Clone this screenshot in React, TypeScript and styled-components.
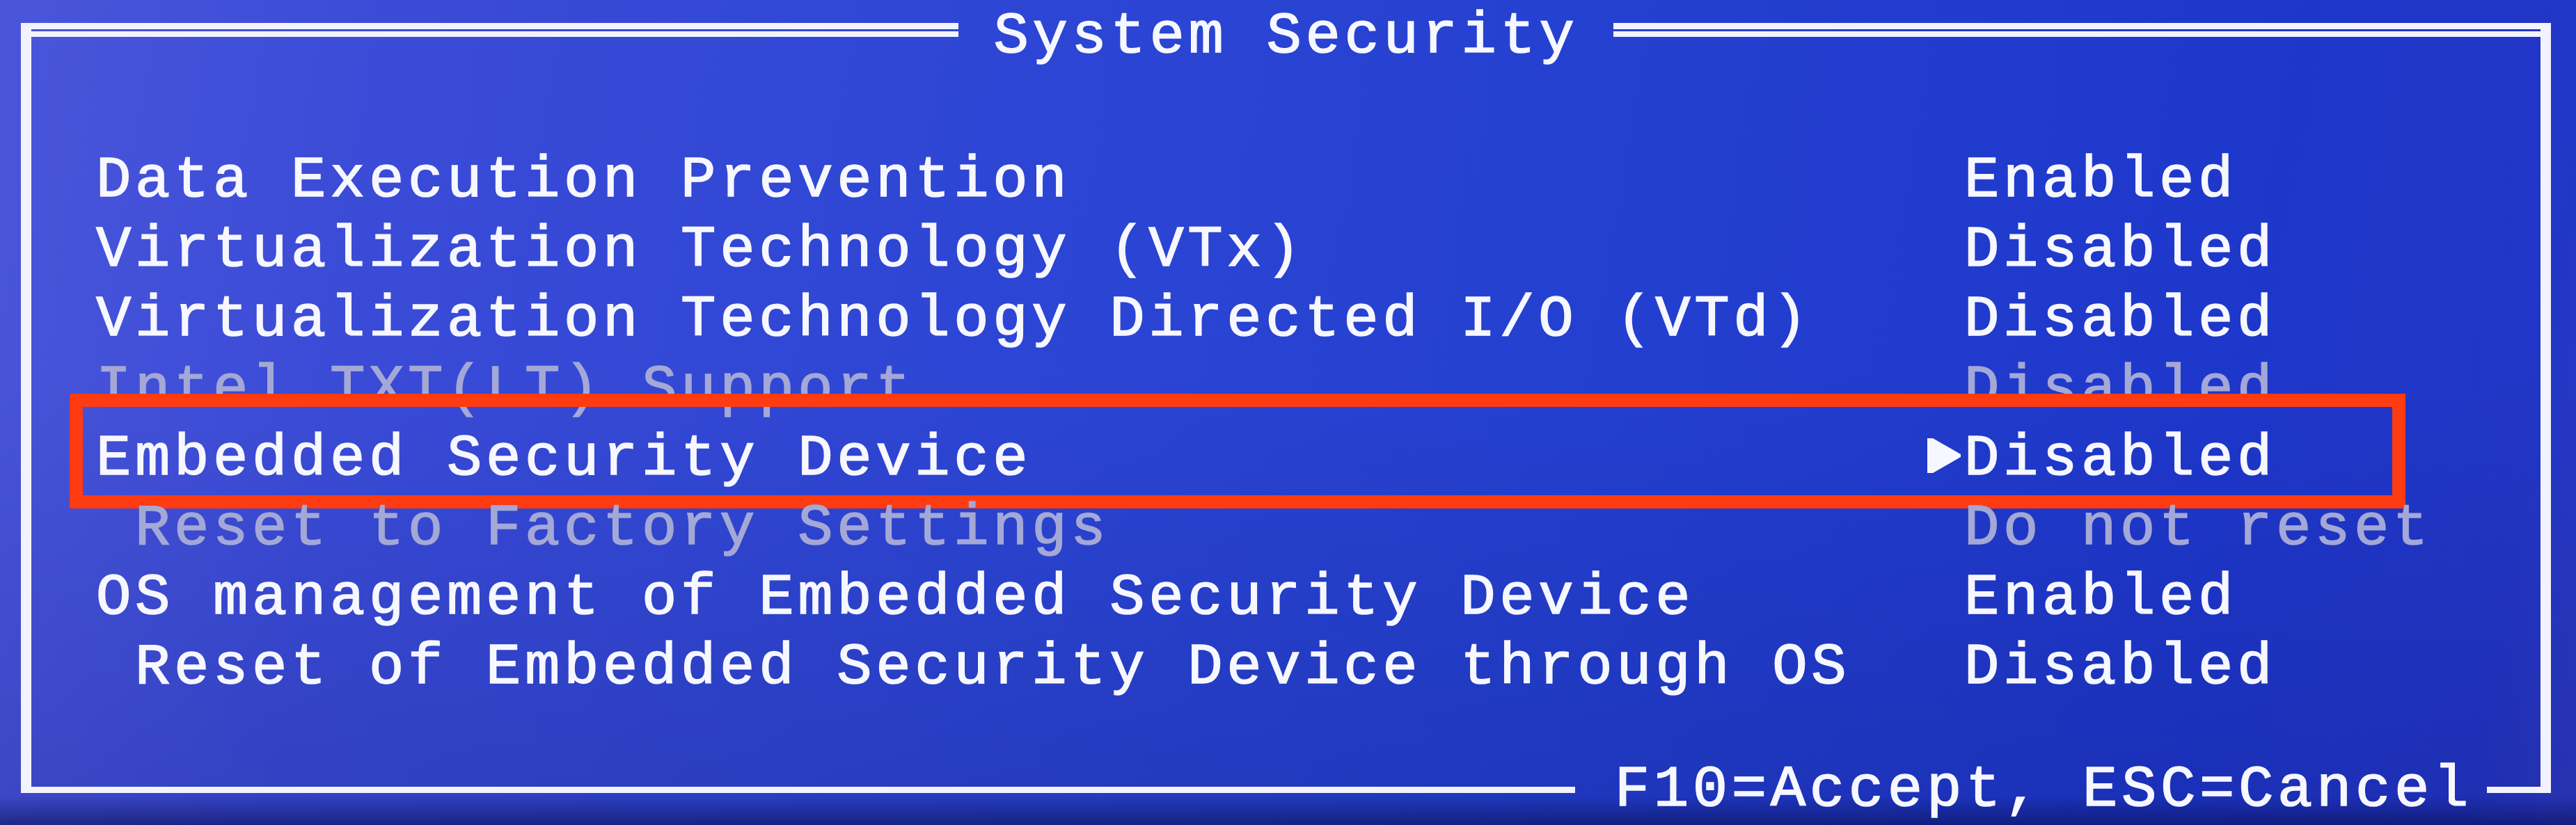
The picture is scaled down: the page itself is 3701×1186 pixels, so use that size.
import React from "react";
import styled, { createGlobalStyle } from "styled-components";

const FONT = `"Liberation Mono", "DejaVu Sans Mono", monospace`;

const Global = createGlobalStyle`
  html, body { margin: 0; padding: 0; background: #2234c8; }
  #root { width: 3701px; height: 1186px; }
`;

const Screen = styled.div`
  position: relative;
  width: 3701px;
  height: 1186px;
  box-sizing: border-box;
  padding: 33px 36px 0 30px;
  overflow: hidden;
  background:
    linear-gradient(180deg, rgba(10, 14, 80, 0) 0%, rgba(10, 14, 80, 0) 96.5%, rgba(10, 14, 80, 0.55) 100%),
    linear-gradient(180deg, rgba(0, 0, 60, 0) 0%, rgba(0, 0, 60, 0) 45%, rgba(0, 0, 60, 0.14) 100%),
    linear-gradient(100deg, #4a56da 0%, #3a4bd7 15%, #2c45d4 40%, #2440d0 60%, #1e37cb 85%, #2236c6 96%, #2e3ac2 100%);
  font-family: ${FONT};
  font-weight: 400;
  color: #f6f7ff;
  -webkit-text-stroke: 1.6px currentColor;
`;

const Frame = styled.div`
  display: flex;
  flex-direction: column;
  height: 1107px;
  border-left: 15px solid #f2f3ff;
  border-right: 15px solid #f2f3ff;
`;

const TopRule = styled.div`
  display: flex;
  align-items: flex-start;
  height: 20px;
`;

const DoubleLine = styled.div`
  flex: 1;
  height: 3px;
  border-top: 9px solid #f2f3ff;
  border-bottom: 8px solid #f2f3ff;
`;

const Title = styled.div`
  margin-top: -22px;
  padding: 0 50px;
  font-size: 84px;
  line-height: 84px;
  letter-spacing: 5.6px;
  white-space: pre;
`;

const Body = styled.div`
  flex: 1;
  display: flex;
  flex-direction: column;
  padding: 157px 0 0 93px;
`;

const Row = styled.div<{ $dim?: boolean }>`
  position: relative;
  display: grid;
  grid-template-columns: 2628px 56px auto;
  height: 100px;
  font-size: 84px;
  line-height: 100px;
  letter-spacing: 5.6px;
  white-space: pre;
  color: ${(p) => (p.$dim ? "#a4a8d6" : "#f6f7ff")};
`;

const Label = styled.span<{ $indent?: boolean }>`
  padding-left: ${(p) => (p.$indent ? "56px" : "0")};
`;

const Marker = styled.span`
  display: flex;
  align-items: flex-start;
  padding-top: 20px;
  padding-left: 3px;
`;

const Value = styled.span``;

const Highlight = styled.div`
  position: absolute;
  left: -38px;
  top: -44px;
  width: 3356px;
  height: 165px;
  box-sizing: border-box;
  border: 19px solid #ff3b12;
  pointer-events: none;
`;

const BottomRule = styled.div`
  display: flex;
  align-items: center;
  height: 9px;
`;

const Line = styled.div<{ $width?: number }>`
  height: 9px;
  background: #f2f3ff;
  ${(p) => (p.$width ? `width: ${p.$width}px;` : "flex: 1;")}
`;

const Footer = styled.div`
  padding: 0 21px 0 57px;
  font-size: 84px;
  line-height: 9px;
  letter-spacing: 5.6px;
  white-space: pre;
`;

type Item = {
  label: string;
  value: string;
  dim?: boolean;
  indent?: boolean;
  selected?: boolean;
};

const items: Item[] = [
  { label: "Data Execution Prevention", value: "Enabled" },
  { label: "Virtualization Technology (VTx)", value: "Disabled" },
  { label: "Virtualization Technology Directed I/O (VTd)", value: "Disabled" },
  { label: "Intel TXT(LT) Support", value: "Disabled", dim: true },
  { label: "Embedded Security Device", value: "Disabled", selected: true },
  { label: "Reset to Factory Settings", value: "Do not reset", dim: true, indent: true },
  { label: "OS management of Embedded Security Device", value: "Enabled" },
  { label: "Reset of Embedded Security Device through OS", value: "Disabled", indent: true },
];

const Arrow = () => (
  <svg width="48" height="50" viewBox="0 0 48 50">
    <polygon points="0,0 8,0 48,23 48,27 8,50 0,50" fill="#f6f7ff" />
  </svg>
);

export default function App() {
  return (
    <>
      <Global />
      <Screen>
        <Frame>
          <TopRule>
            <DoubleLine />
            <Title>System Security</Title>
            <DoubleLine />
          </TopRule>
          <Body>
            {items.map((it) => (
              <Row key={it.label} $dim={it.dim}>
                <Label $indent={it.indent}>{it.label}</Label>
                <Marker>{it.selected ? <Arrow /> : null}</Marker>
                <Value>{it.value}</Value>
                {it.selected ? <Highlight /> : null}
              </Row>
            ))}
          </Body>
          <BottomRule>
            <Line />
            <Footer>F10=Accept, ESC=Cancel</Footer>
            <Line $width={77} />
          </BottomRule>
        </Frame>
      </Screen>
    </>
  );
}
